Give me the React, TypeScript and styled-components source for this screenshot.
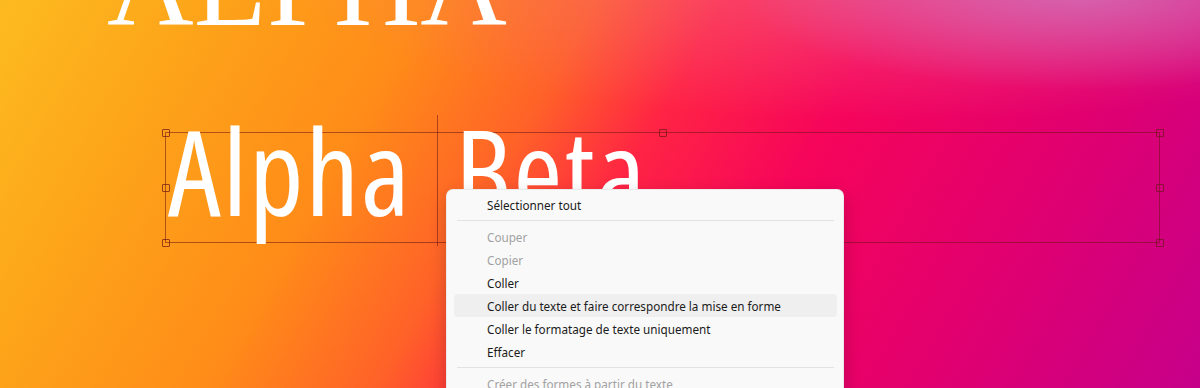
import styled, { createGlobalStyle } from "styled-components";

const Global = createGlobalStyle`
  html, body {
    margin: 0;
    padding: 0;
    width: 1200px;
    height: 388px;
    overflow: hidden;
  }
  * {
    box-sizing: border-box;
  }
`;

const Canvas = styled.main`
  position: relative;
  width: 1200px;
  height: 388px;
  overflow: hidden;
  display: flex;
  flex-direction: column;
  align-items: flex-start;
  background:
    radial-gradient(ellipse 340px 100px at 1080px -10px, rgba(205, 120, 195, 0.75), rgba(205, 120, 195, 0) 100%),
    radial-gradient(ellipse 620px 150px at 900px -30px, rgba(240, 110, 150, 0.55), rgba(240, 110, 150, 0) 100%),
    linear-gradient(
      120deg,
      #fdbb20 0%,
      #fda81a 12%,
      #ff8c18 30%,
      #ff6228 42%,
      #ff2444 51%,
      #f6055a 63%,
      #e2006e 80%,
      #c6008a 100%
    );
`;

const Headline = styled.h1`
  margin: -31px 0 0 107px;
  height: 32px;
  line-height: 32px;
  font-family: "Liberation Serif", "Times New Roman", serif;
  font-weight: 400;
  font-size: 120px;
  color: #ffffff;
  white-space: nowrap;
`;

const SelectionBox = styled.div`
  position: relative;
  margin: 131px 0 0 165px;
  width: 995px;
  height: 111px;
  border: 1.5px solid rgba(110, 22, 24, 0.55);
`;

const TextRow = styled.div`
  display: flex;
  align-items: baseline;
  gap: 43px;
  margin: -22px 0 0 2px;
  font-family: "Open Sans", "Noto Sans", sans-serif;
  font-stretch: 75%;
  font-weight: 500;
  font-size: 119px;
  line-height: 119px;
  letter-spacing: 2px;
  color: #ffffff;
  white-space: nowrap;
`;

const Word = styled.span``;

const ColumnGuide = styled.div`
  position: absolute;
  left: 271px;
  top: -18px;
  bottom: -4px;
  width: 1px;
  background: rgba(110, 22, 24, 0.55);
`;

const Handle = styled.span<{ $x: "start" | "mid" | "end"; $y: "start" | "mid" | "end" }>`
  position: absolute;
  width: 8px;
  height: 8px;
  border: 1.5px solid rgba(110, 22, 24, 0.7);
  border-radius: 1px;
  left: ${(p) => (p.$x === "start" ? "-4.5px" : p.$x === "mid" ? "calc(50% - 4px)" : "calc(100% - 3.5px)")};
  top: ${(p) => (p.$y === "start" ? "-4.5px" : p.$y === "mid" ? "calc(50% - 4px)" : "calc(100% - 3.5px)")};
`;

const Menu = styled.ul`
  position: absolute;
  left: 446px;
  top: 189px;
  width: 398px;
  margin: 0;
  padding: 3px 6px 8px 7px;
  list-style: none;
  background: #f9f9f9;
  border: 1px solid rgba(0, 0, 0, 0.06);
  border-radius: 7px;
  box-shadow: 0 6px 18px rgba(0, 0, 0, 0.18);
  font-family: "Noto Sans", "Open Sans", sans-serif;
  font-size: 11.7px;
`;

const MenuItem = styled.li<{ $disabled?: boolean; $hover?: boolean }>`
  display: flex;
  align-items: center;
  height: 23px;
  padding-left: 33px;
  border-radius: 4px;
  color: ${(p) => (p.$disabled ? "#a2a2a2" : "#1b1b1b")};
  background: ${(p) => (p.$hover ? "#efefef" : "transparent")};
  white-space: nowrap;
`;

const Separator = styled.li`
  height: 1px;
  margin: 4px 3px 4px 3px;
  background: #e2e2e2;
`;

type Entry = { label: string; disabled?: boolean; hover?: boolean } | "sep";

const entries: Entry[] = [
  { label: "Sélectionner tout" },
  "sep",
  { label: "Couper", disabled: true },
  { label: "Copier", disabled: true },
  { label: "Coller" },
  { label: "Coller du texte et faire correspondre la mise en forme", hover: true },
  { label: "Coller le formatage de texte uniquement" },
  { label: "Effacer" },
  "sep",
  { label: "Créer des formes à partir du texte", disabled: true },
];

const handles: Array<["start" | "mid" | "end", "start" | "mid" | "end"]> = [
  ["start", "start"],
  ["mid", "start"],
  ["end", "start"],
  ["start", "mid"],
  ["end", "mid"],
  ["start", "end"],
  ["mid", "end"],
  ["end", "end"],
];

const App = () => {
  return (
    <>
      <Global />
      <Canvas>
        <Headline>ALPHA</Headline>
        <SelectionBox>
          <TextRow>
            <Word>Alpha</Word>
            <Word>Beta</Word>
          </TextRow>
          <ColumnGuide />
          {handles.map(([x, y]) => (
            <Handle key={x + y} $x={x} $y={y} />
          ))}
        </SelectionBox>
        <Menu>
          {entries.map((e, i) =>
            e === "sep" ? (
              <Separator key={i} />
            ) : (
              <MenuItem key={i} $disabled={e.disabled} $hover={e.hover}>
                {e.label}
              </MenuItem>
            )
          )}
        </Menu>
      </Canvas>
    </>
  );
};

export default App;
